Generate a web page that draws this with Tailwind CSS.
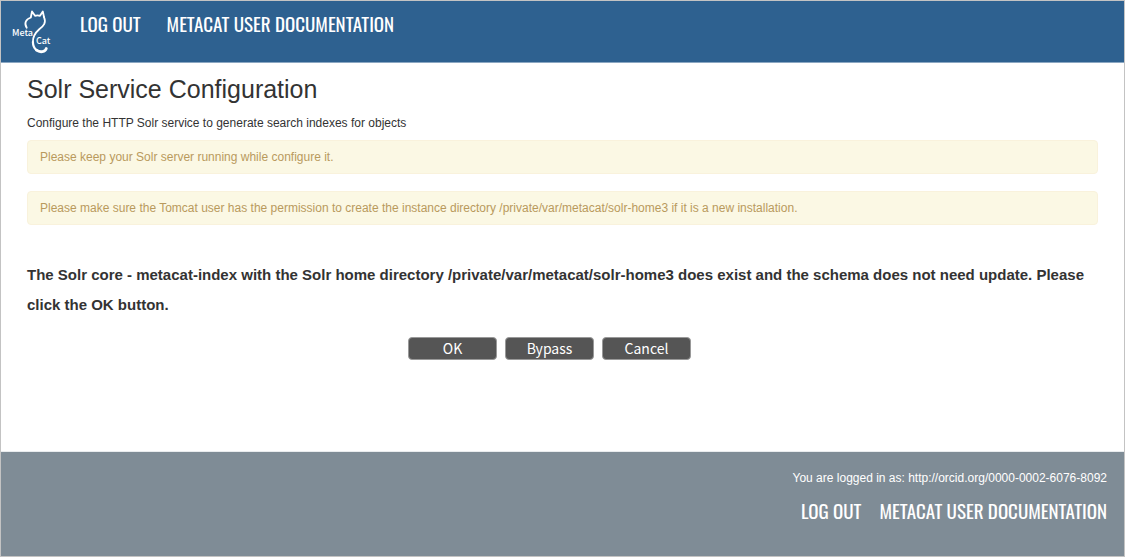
<!DOCTYPE html>
<html lang="en">

<head>
    <meta charset="UTF-8">
    <meta name="viewport" content="width=device-width, initial-scale=1.0">
    <title>Solr Service Configuration</title>
    <script src="https://cdn.jsdelivr.net/npm/@tailwindcss/browser@4"></script>
</head>

<body class="min-h-screen flex flex-col border border-[#c3c3c3] bg-white text-[#333] text-[12px] leading-5 font-['Liberation_Sans',Arial,sans-serif]">

    <header class="flex items-start h-[62px] pl-2 bg-[#2e6190] border-b border-[#8ba7c2]">
        <!-- Metacat logo -->
        <svg class="w-[44px] h-[48px] mt-2" viewBox="0 0 44 48" role="img" aria-label="MetaCat" fill="none" stroke="#fff" stroke-linecap="round" stroke-linejoin="round">
            <path stroke-width="1.8" d="M17.700 18.800C15 14.500 16.500 10.500 21.800 8.500L23 2.500L26 6.800Q28.500 5.800 31 6.800L33.800 2.500L35 8" />
            <path stroke-width="1.8" d="M35 8C37.500 14 34.500 17 30.500 20C26 24 23.700 28 23.900 33" />
            <path stroke-width="2.200" d="M23.900 33C24 37 25.300 39.500 27.500 41.200" />
            <path stroke-width="2.800" d="M27.500 41.200C31 43.800 36.500 43 37.300 39.500" />
            <text x="3" y="27" font-size="9" font-weight="500" fill="#fff" stroke="none" font-family="'Noto Sans CJK SC', sans-serif">Meta</text>
            <text x="27" y="35" font-size="9" font-weight="500" fill="#fff" stroke="none" font-family="'Noto Sans CJK SC', sans-serif">Cat</text>
        </svg>
        <nav class="flex gap-[26px] pt-[10px] pl-[27px] text-[19px] leading-6 text-white uppercase font-[Oswald,'Liberation_Sans_Narrow',sans-serif]">
            <a href="#">Log out</a>
            <a href="#">Metacat user documentation</a>
        </nav>
    </header>

    <main class="grow px-[26px] pt-3">
        <h2 class="text-[25px] leading-7">Solr Service Configuration</h2>
        <p class="mt-[10px]">Configure the HTTP Solr service to generate search indexes for objects</p>

        <div class="mt-[7px] px-3 py-[6px] rounded border border-[#f9f2dc] bg-[#fbf8e4] text-[#b99a5d]">Please keep your Solr server running while configure it.</div>
        <div class="mt-[17px] px-3 py-[6px] rounded border border-[#f9f2dc] bg-[#fbf8e4] text-[#b99a5d]">Please make sure the Tomcat user has the permission to create the instance directory /private/var/metacat/solr-home3 if it is a new installation.</div>

        <form>
            <h3 class="mt-[35px] text-[15px] leading-[30px] font-bold">The Solr core - metacat-index with the Solr home directory /private/var/metacat/solr-home3 does exist and the schema does not need update. Please click the OK button.</h3>

            <div class="flex justify-center gap-2 mt-[17px] pr-[26px] text-[14px] leading-4 text-white font-['Noto_Sans_CJK_SC',sans-serif]">
                <button type="button" class="w-[89px] h-[23px] pb-[2px] rounded border border-[#999] bg-[#555]">OK</button>
                <button type="button" class="w-[89px] h-[23px] pb-[2px] rounded border border-[#999] bg-[#555]">Bypass</button>
                <button type="button" class="w-[89px] h-[23px] pb-[2px] rounded border border-[#999] bg-[#555]">Cancel</button>
            </div>
        </form>
    </main>

    <footer class="flex flex-col items-end h-[105px] pt-4 pr-[17px] bg-[#7f8c96] border-t border-[#e9ecee] text-white">
        <p>You are logged in as: http://orcid.org/0000-0002-6076-8092</p>
        <nav class="flex gap-[18px] mt-[10px] text-[19px] leading-6 uppercase font-[Oswald,'Liberation_Sans_Narrow',sans-serif]">
            <a href="#">Log out</a>
            <a href="#">Metacat user documentation</a>
        </nav>
    </footer>

</body>

</html>
